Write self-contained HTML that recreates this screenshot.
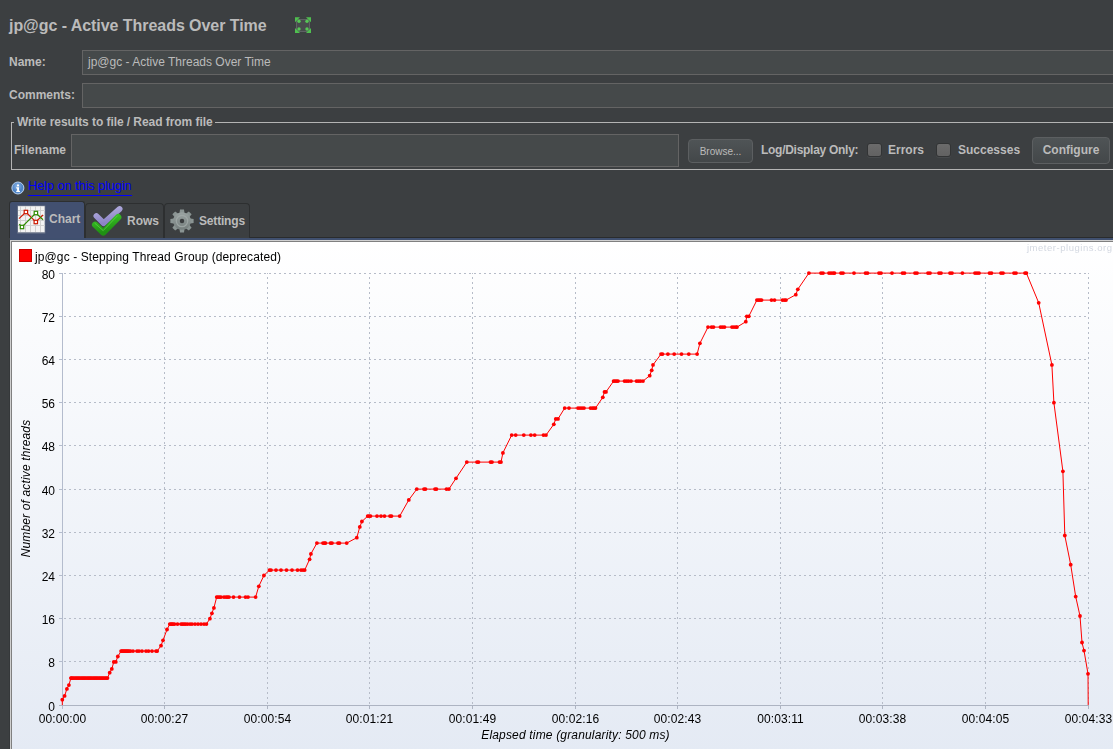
<!DOCTYPE html>
<html><head><meta charset="utf-8"><title>jp@gc - Active Threads Over Time</title>
<style>
html,body{margin:0;padding:0;}
body{width:1113px;height:749px;overflow:hidden;background:#3c3f41;font-family:"Liberation Sans",Arial,sans-serif;font-size:12px;color:#bbbbbb;position:relative;}
.abs{position:absolute;white-space:nowrap;}
.b{font-weight:bold;}
.title{left:9px;top:16px;font-size:16px;font-weight:bold;line-height:20px;letter-spacing:-0.05px;}
.lbl{font-weight:bold;line-height:14px;}
.field{background:#45494a;border:1px solid #646464;box-sizing:border-box;}
.fs{left:11px;top:122px;width:1120px;height:48px;border:1px solid #b4b4b4;box-sizing:border-box;}
.legend{left:14px;top:115px;background:#3c3f41;padding:0 2px 0 3px;letter-spacing:-0.06px;line-height:14px;font-weight:bold;}
.btn{box-sizing:border-box;border:1px solid #5c5f61;border-radius:4px;background:linear-gradient(#4f5456,#434749);text-align:center;}
.cb{width:15px;height:14px;box-sizing:border-box;border-radius:3px;background:linear-gradient(#6b6b6b,#626262);border:1px solid #323435;box-shadow:0 1px 0 #474a4c;}
a.help{color:#0000ff;text-decoration:none;font-size:12.6px;line-height:14px;border-bottom:1px solid #0000ff;padding-bottom:2px;}
.tab{box-sizing:border-box;border:1px solid #2d2f30;border-bottom:none;border-radius:4px 4px 0 0;background:#3c3f41;}
.tabsel{background:#425070;border-color:#2d2f30;border-radius:3px 3px 0 0;height:37px !important;}
svg text{font-family:"Liberation Sans",Arial,sans-serif;}
.g{stroke:#b6bcc8;stroke-width:1;stroke-dasharray:2 3;shape-rendering:crispEdges;}
.ax{stroke:#adb4c2;stroke-width:1;shape-rendering:crispEdges;}
.ay{stroke:#b4bccd;stroke-width:1;shape-rendering:crispEdges;}
</style></head><body>

<div class="abs title">jp@gc - Active Threads Over Time</div>
<svg class="abs" style="left:294px;top:16px" width="18" height="18" viewBox="0 0 18 18">
 <rect x="2.500" y="3.500" width="13" height="12" rx="2.500" fill="#484b4d" stroke="#5f6264"/>
 <g fill="#4fc04f">
  <path d="M1 1.200H6L1 6.200Z"/><path d="M17 1.200V6.200L12 1.200Z"/><path d="M17 17H12L17 12Z"/><path d="M1 17V12L6 17Z"/>
 </g>
 <g fill="#56c656">
  <circle cx="5" cy="5.300" r="1.700"/><circle cx="13" cy="5.300" r="1.700"/><circle cx="13" cy="13" r="1.700"/><circle cx="5" cy="13" r="1.700"/>
 </g>
</svg>

<div class="abs lbl" style="left:9px;top:55px">Name:</div>
<div class="abs field" style="left:82px;top:50px;width:1040px;height:25px;"></div>
<div class="abs" style="left:88px;top:55px;line-height:14px;">jp@gc - Active Threads Over Time</div>

<div class="abs lbl" style="left:9px;top:88px">Comments:</div>
<div class="abs field" style="left:82px;top:83px;width:1040px;height:25px;"></div>

<div class="abs fs"></div>
<div class="abs legend">Write results to file / Read from file</div>
<div class="abs lbl" style="left:14px;top:143px">Filename</div>
<div class="abs field" style="left:71px;top:134px;width:608px;height:33px;"></div>
<div class="abs btn" style="left:688px;top:139px;width:65px;height:24px;font-size:10px;line-height:23px;">Browse...</div>
<div class="abs lbl" style="left:761px;top:143px;letter-spacing:-0.28px">Log/Display Only:</div>
<div class="abs cb" style="left:867px;top:143px"></div>
<div class="abs lbl" style="left:888px;top:143px">Errors</div>
<div class="abs cb" style="left:936px;top:143px"></div>
<div class="abs lbl" style="left:958px;top:143px">Successes</div>
<div class="abs btn lbl" style="left:1032px;top:137px;width:78px;height:27px;line-height:25px;">Configure</div>

<svg class="abs" style="left:11px;top:181px" width="14" height="14" viewBox="0 0 14 14">
 <defs><radialGradient id="ig" cx="0.450" cy="0.350" r="0.750"><stop offset="0" stop-color="#8db6e6"/><stop offset="0.600" stop-color="#4a80c4"/><stop offset="1" stop-color="#7aa6dc"/></radialGradient></defs>
 <circle cx="6.900" cy="7" r="6" fill="url(#ig)" stroke="#b9d2ef" stroke-width="1"/>
 <rect x="6" y="3.500" width="2" height="1.800" fill="#fff"/><path d="M5.200 6.300h2.800v3.500h1v1.200H5.200v-1.200h0.900V7.400H5.200z" fill="#fff"/>
</svg>
<a class="abs help" style="left:28px;top:179px">Help on this plugin</a>

<!-- tabs -->
<div class="abs" style="left:10px;top:237px;width:1110px;height:1px;background:#2a2c2d;"></div>
<div class="abs" style="left:10px;top:238px;width:1110px;height:2px;background:#40506f;"></div>
<div class="abs tab" style="left:85px;top:203px;width:79px;height:35px;"></div>
<div class="abs tab" style="left:164px;top:203px;width:86px;height:35px;"></div>
<div class="abs tab tabsel" style="left:9px;top:201px;width:76px;height:39px;"></div>
<div class="abs lbl" style="left:49px;top:212px">Chart</div>
<div class="abs lbl" style="left:127px;top:214px">Rows</div>
<div class="abs lbl" style="left:199px;top:214px;letter-spacing:-0.18px">Settings</div>

<!-- chart icon -->
<svg class="abs" style="left:17px;top:205px" width="29" height="29" viewBox="0 0 29 29">
 <rect x="0.300" y="0.500" width="28" height="28" fill="#9a9ea8" opacity="0.550"/>
 <rect x="1" y="1.200" width="26.600" height="26" fill="#f3f3f3"/>
 <g stroke="#d0d0d0" stroke-width="1"><path d="M3.500 1V27M8.500 1V27M13.500 1V27M18.500 1V27M23.500 1V27M1 5.500H28M1 10.500H28M1 15.500H28M1 20.500H28"/></g>
 <polyline points="2,13.600 8.900,7 18.800,17 26,10" fill="none" stroke="#cc1a00" stroke-width="1.200"/>
 <polyline points="2.200,19.200 5,22 18.900,8 26,14.700" fill="none" stroke="#2e8b00" stroke-width="1.200"/>
 <rect x="7.200" y="5.300" width="3.400" height="3.400" fill="#fff" stroke="#cc1a00" stroke-width="1.200"/>
 <rect x="17.100" y="15.300" width="3.400" height="3.400" fill="#fff" stroke="#cc1a00" stroke-width="1.200"/>
 <rect x="3.300" y="20.300" width="3.400" height="3.400" fill="#fff" stroke="#2e8b00" stroke-width="1.200"/>
 <rect x="17.200" y="6.300" width="3.400" height="3.400" fill="#fff" stroke="#2e8b00" stroke-width="1.200"/>
</svg>
<!-- check icon -->
<svg class="abs" style="left:90px;top:204px" width="34" height="34" viewBox="90 204 34 34">
 <defs>
  <linearGradient id="pg" x1="0" y1="0" x2="0.300" y2="1"><stop offset="0" stop-color="#b2addf"/><stop offset="1" stop-color="#8c84c6"/></linearGradient>
  <linearGradient id="gg" x1="0" y1="0" x2="0.300" y2="1"><stop offset="0" stop-color="#3cc428"/><stop offset="1" stop-color="#1f9012"/></linearGradient>
 </defs>
 <path d="M96.400 216 L103.600 223.100 L119.600 209" fill="none" stroke="url(#pg)" stroke-width="5.800" stroke-linecap="round" stroke-linejoin="round"/>
 <path d="M95.200 224.800 L103.200 232.400 L118.200 217.200" fill="none" stroke="url(#gg)" stroke-width="6.400" stroke-linecap="round" stroke-linejoin="round"/>
 <path d="M95 223.400 L103.200 230.600 L117.200 216" fill="none" stroke="#66dc50" stroke-width="0.900" stroke-linecap="round" stroke-linejoin="round" opacity="0.700"/>
</svg>
<!-- gear icon -->
<svg class="abs" style="left:168.800px;top:207.800px" width="26" height="26" viewBox="-13.200 -13.200 26.400 26.400">
 <defs><linearGradient id="grg" gradientUnits="userSpaceOnUse" x1="0" y1="-12" x2="0" y2="12"><stop offset="0" stop-color="#a0a9a8"/><stop offset="1" stop-color="#6f7877"/></linearGradient></defs>
 <g fill="#8a9493">
  <path d="M-2 -11.800H2L2.700 -7H-2.700Z" transform="rotate(0)"/>
  <path d="M-2 -11.800H2L2.700 -7H-2.700Z" transform="rotate(45)"/>
  <path d="M-2 -11.800H2L2.700 -7H-2.700Z" transform="rotate(90)"/>
  <path d="M-2 -11.800H2L2.700 -7H-2.700Z" transform="rotate(135)"/>
  <path d="M-2 -11.800H2L2.700 -7H-2.700Z" transform="rotate(180)"/>
  <path d="M-2 -11.800H2L2.700 -7H-2.700Z" transform="rotate(225)"/>
  <path d="M-2 -11.800H2L2.700 -7H-2.700Z" transform="rotate(270)"/>
  <path d="M-2 -11.800H2L2.700 -7H-2.700Z" transform="rotate(315)"/>
 </g>
 <circle r="9" fill="url(#grg)"/>
 <circle r="5.800" fill="none" stroke="#a3abaa" stroke-width="1.200" opacity="0.800"/>
 <circle r="2.300" fill="#3a3d3f"/>
</svg>

<!-- chart panel -->
<svg class="abs" style="left:0;top:0;will-change:transform" width="1113" height="749" viewBox="0 0 1113 749">
 <defs><linearGradient id="cg" x1="0" y1="0" x2="0" y2="1"><stop offset="0" stop-color="#ffffff"/><stop offset="1" stop-color="#e4eaf4"/></linearGradient></defs>
 <rect x="9" y="240" width="1" height="520" fill="#35383a"/>
 <rect x="10" y="240" width="1110" height="520" fill="#d0d0d0"/>
 <rect x="11" y="241" width="1110" height="520" fill="#808080"/>
 <rect x="12" y="242" width="1110" height="510" fill="url(#cg)"/>
 <text x="1112.5" y="251" text-anchor="end" font-size="9.5" fill="#d3d8e1" letter-spacing="0.53">jmeter-plugins.org</text>
 <rect x="19.500" y="249.500" width="12" height="12" fill="#ff0000" stroke="#c80000"/>
 <g font-size="12" fill="#000000">
 <text x="35" y="261" letter-spacing="0.11">jp@gc - Stepping Thread Group (deprecated)</text>
 <text x="55" y="710.5" text-anchor="end">0</text><text x="55" y="666.5" text-anchor="end">8</text><text x="55" y="623.5" text-anchor="end">16</text><text x="55" y="580.5" text-anchor="end">24</text><text x="55" y="537.5" text-anchor="end">32</text><text x="55" y="494.5" text-anchor="end">40</text><text x="55" y="450.5" text-anchor="end">48</text><text x="55" y="407.5" text-anchor="end">56</text><text x="55" y="364.5" text-anchor="end">64</text><text x="55" y="321.5" text-anchor="end">72</text><text x="55" y="278.5" text-anchor="end">80</text>
 <text x="62.5" y="723" text-anchor="middle" letter-spacing="0.1">00:00:00</text><text x="164.5" y="723" text-anchor="middle" letter-spacing="0.1">00:00:27</text><text x="267.5" y="723" text-anchor="middle" letter-spacing="0.1">00:00:54</text><text x="369.5" y="723" text-anchor="middle" letter-spacing="0.1">00:01:21</text><text x="472.5" y="723" text-anchor="middle" letter-spacing="0.1">00:01:49</text><text x="575.5" y="723" text-anchor="middle" letter-spacing="0.1">00:02:16</text><text x="677.5" y="723" text-anchor="middle" letter-spacing="0.1">00:02:43</text><text x="780.5" y="723" text-anchor="middle" letter-spacing="0.1">00:03:11</text><text x="882.5" y="723" text-anchor="middle" letter-spacing="0.1">00:03:38</text><text x="985.5" y="723" text-anchor="middle" letter-spacing="0.1">00:04:05</text><text x="1088.5" y="723" text-anchor="middle" letter-spacing="0.1">00:04:33</text>
 <text x="575.5" y="739" text-anchor="middle" font-style="italic" letter-spacing="0.17">Elapsed time (granularity: 500 ms)</text>
 <text transform="translate(30.4,488.5) rotate(-90)" text-anchor="middle" font-style="italic" letter-spacing="0.15">Number of active threads</text>
 </g>
 <line x1="164.5" y1="273" x2="164.5" y2="705" class="g" stroke-dashoffset="1"/>
<line x1="164.5" y1="705" x2="164.5" y2="709" class="ax"/>
<line x1="267.5" y1="273" x2="267.5" y2="705" class="g" stroke-dashoffset="1"/>
<line x1="267.5" y1="705" x2="267.5" y2="709" class="ax"/>
<line x1="369.5" y1="273" x2="369.5" y2="705" class="g" stroke-dashoffset="1"/>
<line x1="369.5" y1="705" x2="369.5" y2="709" class="ax"/>
<line x1="472.5" y1="273" x2="472.5" y2="705" class="g" stroke-dashoffset="1"/>
<line x1="472.5" y1="705" x2="472.5" y2="709" class="ax"/>
<line x1="575.5" y1="273" x2="575.5" y2="705" class="g" stroke-dashoffset="1"/>
<line x1="575.5" y1="705" x2="575.5" y2="709" class="ax"/>
<line x1="677.5" y1="273" x2="677.5" y2="705" class="g" stroke-dashoffset="1"/>
<line x1="677.5" y1="705" x2="677.5" y2="709" class="ax"/>
<line x1="780.5" y1="273" x2="780.5" y2="705" class="g" stroke-dashoffset="1"/>
<line x1="780.5" y1="705" x2="780.5" y2="709" class="ax"/>
<line x1="882.5" y1="273" x2="882.5" y2="705" class="g" stroke-dashoffset="1"/>
<line x1="882.5" y1="705" x2="882.5" y2="709" class="ax"/>
<line x1="985.5" y1="273" x2="985.5" y2="705" class="g" stroke-dashoffset="1"/>
<line x1="985.5" y1="705" x2="985.5" y2="709" class="ax"/>
<line x1="1088.5" y1="273" x2="1088.5" y2="705" class="g" stroke-dashoffset="1"/>
<line x1="1088.5" y1="705" x2="1088.5" y2="709" class="ax"/>
<line x1="64" y1="661.5" x2="1089" y2="661.5" class="g"/>
<line x1="59" y1="661.5" x2="63" y2="661.5" class="ay"/>
<line x1="64" y1="618.5" x2="1089" y2="618.5" class="g"/>
<line x1="59" y1="618.5" x2="63" y2="618.5" class="ay"/>
<line x1="64" y1="575.5" x2="1089" y2="575.5" class="g"/>
<line x1="59" y1="575.5" x2="63" y2="575.5" class="ay"/>
<line x1="64" y1="532.5" x2="1089" y2="532.5" class="g"/>
<line x1="59" y1="532.5" x2="63" y2="532.5" class="ay"/>
<line x1="64" y1="489.5" x2="1089" y2="489.5" class="g"/>
<line x1="59" y1="489.5" x2="63" y2="489.5" class="ay"/>
<line x1="64" y1="445.5" x2="1089" y2="445.5" class="g"/>
<line x1="59" y1="445.5" x2="63" y2="445.5" class="ay"/>
<line x1="64" y1="402.5" x2="1089" y2="402.5" class="g"/>
<line x1="59" y1="402.5" x2="63" y2="402.5" class="ay"/>
<line x1="64" y1="359.5" x2="1089" y2="359.5" class="g"/>
<line x1="59" y1="359.5" x2="63" y2="359.5" class="ay"/>
<line x1="64" y1="316.5" x2="1089" y2="316.5" class="g"/>
<line x1="59" y1="316.5" x2="63" y2="316.5" class="ay"/>
<line x1="64" y1="273.5" x2="1089" y2="273.5" class="g"/>
<line x1="59" y1="273.5" x2="63" y2="273.5" class="ay"/>
 <line x1="62.500" y1="273" x2="62.500" y2="709" class="ay"/>
 <line x1="59" y1="705.500" x2="1089" y2="705.500" class="ax"/>
 <polyline points="62.3,705.1 62.3,699.7 64.6,695.9 66.9,688.9 68.9,685.1 70.9,678.1 71.5,678.1 72.7,678.1 73.9,678.1 75.1,678.1 76.3,678.1 77.5,678.1 78.7,678.1 79.9,678.1 81.1,678.1 82.3,678.1 83.5,678.1 84.7,678.1 85.9,678.1 87.1,678.1 88.3,678.1 89.5,678.1 90.7,678.1 91.9,678.1 93.1,678.1 94.3,678.1 95.5,678.1 96.7,678.1 97.9,678.1 99.1,678.1 100.3,678.1 101.5,678.1 102.7,678.1 103.9,678.1 105.1,678.1 106.3,678.1 107.5,678.1 109.7,672.7 111.8,668.9 113.8,661.9 115.8,661.9 117.8,656.5 121.1,651.1 122.0,651.1 123.0,651.1 124.0,651.1 125.0,651.1 126.0,651.1 127.0,651.1 128.0,651.1 129.0,651.1 130.5,651.1 133.0,651.1 137.0,651.1 139.0,651.1 142.0,651.1 146.0,651.1 148.5,651.1 152.0,651.1 156.0,651.1 157.2,651.1 161.0,645.7 163.0,640.3 167.0,629.5 169.8,624.1 171.0,624.1 172.0,624.1 173.0,624.1 174.5,624.1 177.5,624.1 181.0,624.1 182.5,624.1 184.0,624.1 185.5,624.1 187.5,624.1 190.0,624.1 192.0,624.1 195.0,624.1 198.0,624.1 201.0,624.1 204.0,624.1 206.4,624.1 209.9,618.7 211.9,613.3 213.9,607.9 216.7,597.1 218.0,597.1 219.5,597.1 221.0,597.1 224.0,597.1 226.0,597.1 227.5,597.1 229.0,597.1 233.5,597.1 239.5,597.1 245.5,597.1 248.0,597.1 255.6,597.1 258.8,586.3 263.9,575.5 269.4,570.1 271.0,570.1 276.0,570.1 281.0,570.1 286.5,570.1 292.0,570.1 297.5,570.1 301.0,570.1 303.0,570.1 304.7,570.1 309.6,559.3 310.9,553.9 316.9,543.1 323.0,543.1 324.5,543.1 325.5,543.1 330.5,543.1 332.0,543.1 338.0,543.1 339.5,543.1 346.7,543.1 356.8,537.7 359.8,526.9 361.9,521.5 367.7,516.1 369.0,516.1 370.5,516.1 377.0,516.1 381.0,516.1 384.5,516.1 390.0,516.1 391.5,516.1 399.7,516.1 408.8,499.9 416.8,489.1 424.0,489.1 425.5,489.1 435.0,489.1 436.5,489.1 446.5,489.1 448.9,489.1 456.0,478.3 466.8,462.1 477.0,462.1 478.5,462.1 490.5,462.1 492.0,462.1 499.5,462.1 501.0,462.1 502.9,452.9 511.7,435.1 515.7,435.1 523.8,435.1 530.9,435.1 534.7,435.1 543.5,435.1 546.0,435.1 553.8,424.3 555.8,418.9 558.0,418.9 564.7,408.1 569.0,408.1 578.0,408.1 580.0,408.1 582.0,408.1 584.0,408.1 590.5,408.1 592.5,408.1 594.0,408.1 595.5,408.1 602.8,397.3 604.5,391.9 606.0,391.9 613.6,381.1 615.0,381.1 616.5,381.1 618.0,381.1 624.5,381.1 626.5,381.1 628.5,381.1 631.0,381.1 636.5,381.1 638.5,381.1 640.5,381.1 643.0,381.1 649.7,375.7 651.7,370.3 653.0,364.9 661.0,354.1 662.5,354.1 667.9,354.1 674.2,354.1 681.5,354.1 688.8,354.1 697.1,354.1 699.9,343.3 708.0,327.1 711.5,327.1 713.5,327.1 720.5,327.1 722.5,327.1 724.5,327.1 732.0,327.1 734.0,327.1 736.0,327.1 737.0,327.1 745.8,321.7 746.8,316.3 748.8,316.3 756.9,300.1 758.5,300.1 760.0,300.1 761.5,300.1 771.5,300.1 774.5,300.1 782.5,300.1 784.5,300.1 786.0,300.1 795.8,294.7 797.8,289.3 808.9,273.1 821.0,273.1 823.0,273.1 829.0,273.1 831.0,273.1 833.0,273.1 834.5,273.1 841.0,273.1 843.0,273.1 854.0,273.1 865.5,273.1 867.5,273.1 879.0,273.1 881.0,273.1 892.0,273.1 902.5,273.1 904.5,273.1 915.0,273.1 917.0,273.1 928.0,273.1 930.0,273.1 939.0,273.1 941.0,273.1 950.0,273.1 952.0,273.1 962.4,273.1 975.0,273.1 977.0,273.1 979.0,273.1 989.5,273.1 991.5,273.1 1001.0,273.1 1003.0,273.1 1014.0,273.1 1016.0,273.1 1025.0,273.1 1026.4,273.1 1038.7,302.8 1051.9,364.9 1053.9,402.7 1062.9,471.3 1064.8,535.5 1070.7,564.7 1075.7,596.6 1080.0,616.0 1082.0,642.5 1084.0,650.6 1088.0,673.8 1088.2,705.1" fill="none" stroke="#ff0000" stroke-width="1"/>
 <g fill="#ff0000"><circle cx="62.3" cy="699.7" r="1.9"/><circle cx="64.6" cy="695.9" r="1.9"/><circle cx="66.9" cy="688.9" r="1.9"/><circle cx="68.9" cy="685.1" r="1.9"/><circle cx="70.9" cy="678.1" r="1.9"/><circle cx="71.5" cy="678.1" r="1.9"/><circle cx="72.7" cy="678.1" r="1.9"/><circle cx="73.9" cy="678.1" r="1.9"/><circle cx="75.1" cy="678.1" r="1.9"/><circle cx="76.3" cy="678.1" r="1.9"/><circle cx="77.5" cy="678.1" r="1.9"/><circle cx="78.7" cy="678.1" r="1.9"/><circle cx="79.9" cy="678.1" r="1.9"/><circle cx="81.1" cy="678.1" r="1.9"/><circle cx="82.3" cy="678.1" r="1.9"/><circle cx="83.5" cy="678.1" r="1.9"/><circle cx="84.7" cy="678.1" r="1.9"/><circle cx="85.9" cy="678.1" r="1.9"/><circle cx="87.1" cy="678.1" r="1.9"/><circle cx="88.3" cy="678.1" r="1.9"/><circle cx="89.5" cy="678.1" r="1.9"/><circle cx="90.7" cy="678.1" r="1.9"/><circle cx="91.9" cy="678.1" r="1.9"/><circle cx="93.1" cy="678.1" r="1.9"/><circle cx="94.3" cy="678.1" r="1.9"/><circle cx="95.5" cy="678.1" r="1.9"/><circle cx="96.7" cy="678.1" r="1.9"/><circle cx="97.9" cy="678.1" r="1.9"/><circle cx="99.1" cy="678.1" r="1.9"/><circle cx="100.3" cy="678.1" r="1.9"/><circle cx="101.5" cy="678.1" r="1.9"/><circle cx="102.7" cy="678.1" r="1.9"/><circle cx="103.9" cy="678.1" r="1.9"/><circle cx="105.1" cy="678.1" r="1.9"/><circle cx="106.3" cy="678.1" r="1.9"/><circle cx="107.5" cy="678.1" r="1.9"/><circle cx="109.7" cy="672.7" r="1.9"/><circle cx="111.8" cy="668.9" r="1.9"/><circle cx="113.8" cy="661.9" r="1.9"/><circle cx="115.8" cy="661.9" r="1.9"/><circle cx="117.8" cy="656.5" r="1.9"/><circle cx="121.1" cy="651.1" r="1.9"/><circle cx="122.0" cy="651.1" r="1.9"/><circle cx="123.0" cy="651.1" r="1.9"/><circle cx="124.0" cy="651.1" r="1.9"/><circle cx="125.0" cy="651.1" r="1.9"/><circle cx="126.0" cy="651.1" r="1.9"/><circle cx="127.0" cy="651.1" r="1.9"/><circle cx="128.0" cy="651.1" r="1.9"/><circle cx="129.0" cy="651.1" r="1.9"/><circle cx="130.5" cy="651.1" r="1.9"/><circle cx="133.0" cy="651.1" r="1.9"/><circle cx="137.0" cy="651.1" r="1.9"/><circle cx="139.0" cy="651.1" r="1.9"/><circle cx="142.0" cy="651.1" r="1.9"/><circle cx="146.0" cy="651.1" r="1.9"/><circle cx="148.5" cy="651.1" r="1.9"/><circle cx="152.0" cy="651.1" r="1.9"/><circle cx="156.0" cy="651.1" r="1.9"/><circle cx="157.2" cy="651.1" r="1.9"/><circle cx="161.0" cy="645.7" r="1.9"/><circle cx="163.0" cy="640.3" r="1.9"/><circle cx="167.0" cy="629.5" r="1.9"/><circle cx="169.8" cy="624.1" r="1.9"/><circle cx="171.0" cy="624.1" r="1.9"/><circle cx="172.0" cy="624.1" r="1.9"/><circle cx="173.0" cy="624.1" r="1.9"/><circle cx="174.5" cy="624.1" r="1.9"/><circle cx="177.5" cy="624.1" r="1.9"/><circle cx="181.0" cy="624.1" r="1.9"/><circle cx="182.5" cy="624.1" r="1.9"/><circle cx="184.0" cy="624.1" r="1.9"/><circle cx="185.5" cy="624.1" r="1.9"/><circle cx="187.5" cy="624.1" r="1.9"/><circle cx="190.0" cy="624.1" r="1.9"/><circle cx="192.0" cy="624.1" r="1.9"/><circle cx="195.0" cy="624.1" r="1.9"/><circle cx="198.0" cy="624.1" r="1.9"/><circle cx="201.0" cy="624.1" r="1.9"/><circle cx="204.0" cy="624.1" r="1.9"/><circle cx="206.4" cy="624.1" r="1.9"/><circle cx="209.9" cy="618.7" r="1.9"/><circle cx="211.9" cy="613.3" r="1.9"/><circle cx="213.9" cy="607.9" r="1.9"/><circle cx="216.7" cy="597.1" r="1.9"/><circle cx="218.0" cy="597.1" r="1.9"/><circle cx="219.5" cy="597.1" r="1.9"/><circle cx="221.0" cy="597.1" r="1.9"/><circle cx="224.0" cy="597.1" r="1.9"/><circle cx="226.0" cy="597.1" r="1.9"/><circle cx="227.5" cy="597.1" r="1.9"/><circle cx="229.0" cy="597.1" r="1.9"/><circle cx="233.5" cy="597.1" r="1.9"/><circle cx="239.5" cy="597.1" r="1.9"/><circle cx="245.5" cy="597.1" r="1.9"/><circle cx="248.0" cy="597.1" r="1.9"/><circle cx="255.6" cy="597.1" r="1.9"/><circle cx="258.8" cy="586.3" r="1.9"/><circle cx="263.9" cy="575.5" r="1.9"/><circle cx="269.4" cy="570.1" r="1.9"/><circle cx="271.0" cy="570.1" r="1.9"/><circle cx="276.0" cy="570.1" r="1.9"/><circle cx="281.0" cy="570.1" r="1.9"/><circle cx="286.5" cy="570.1" r="1.9"/><circle cx="292.0" cy="570.1" r="1.9"/><circle cx="297.5" cy="570.1" r="1.9"/><circle cx="301.0" cy="570.1" r="1.9"/><circle cx="303.0" cy="570.1" r="1.9"/><circle cx="304.7" cy="570.1" r="1.9"/><circle cx="309.6" cy="559.3" r="1.9"/><circle cx="310.9" cy="553.9" r="1.9"/><circle cx="316.9" cy="543.1" r="1.9"/><circle cx="323.0" cy="543.1" r="1.9"/><circle cx="324.5" cy="543.1" r="1.9"/><circle cx="325.5" cy="543.1" r="1.9"/><circle cx="330.5" cy="543.1" r="1.9"/><circle cx="332.0" cy="543.1" r="1.9"/><circle cx="338.0" cy="543.1" r="1.9"/><circle cx="339.5" cy="543.1" r="1.9"/><circle cx="346.7" cy="543.1" r="1.9"/><circle cx="356.8" cy="537.7" r="1.9"/><circle cx="359.8" cy="526.9" r="1.9"/><circle cx="361.9" cy="521.5" r="1.9"/><circle cx="367.7" cy="516.1" r="1.9"/><circle cx="369.0" cy="516.1" r="1.9"/><circle cx="370.5" cy="516.1" r="1.9"/><circle cx="377.0" cy="516.1" r="1.9"/><circle cx="381.0" cy="516.1" r="1.9"/><circle cx="384.5" cy="516.1" r="1.9"/><circle cx="390.0" cy="516.1" r="1.9"/><circle cx="391.5" cy="516.1" r="1.9"/><circle cx="399.7" cy="516.1" r="1.9"/><circle cx="408.8" cy="499.9" r="1.9"/><circle cx="416.8" cy="489.1" r="1.9"/><circle cx="424.0" cy="489.1" r="1.9"/><circle cx="425.5" cy="489.1" r="1.9"/><circle cx="435.0" cy="489.1" r="1.9"/><circle cx="436.5" cy="489.1" r="1.9"/><circle cx="446.5" cy="489.1" r="1.9"/><circle cx="448.9" cy="489.1" r="1.9"/><circle cx="456.0" cy="478.3" r="1.9"/><circle cx="466.8" cy="462.1" r="1.9"/><circle cx="477.0" cy="462.1" r="1.9"/><circle cx="478.5" cy="462.1" r="1.9"/><circle cx="490.5" cy="462.1" r="1.9"/><circle cx="492.0" cy="462.1" r="1.9"/><circle cx="499.5" cy="462.1" r="1.9"/><circle cx="501.0" cy="462.1" r="1.9"/><circle cx="502.9" cy="452.9" r="1.9"/><circle cx="511.7" cy="435.1" r="1.9"/><circle cx="515.7" cy="435.1" r="1.9"/><circle cx="523.8" cy="435.1" r="1.9"/><circle cx="530.9" cy="435.1" r="1.9"/><circle cx="534.7" cy="435.1" r="1.9"/><circle cx="543.5" cy="435.1" r="1.9"/><circle cx="546.0" cy="435.1" r="1.9"/><circle cx="553.8" cy="424.3" r="1.9"/><circle cx="555.8" cy="418.9" r="1.9"/><circle cx="558.0" cy="418.9" r="1.9"/><circle cx="564.7" cy="408.1" r="1.9"/><circle cx="569.0" cy="408.1" r="1.9"/><circle cx="578.0" cy="408.1" r="1.9"/><circle cx="580.0" cy="408.1" r="1.9"/><circle cx="582.0" cy="408.1" r="1.9"/><circle cx="584.0" cy="408.1" r="1.9"/><circle cx="590.5" cy="408.1" r="1.9"/><circle cx="592.5" cy="408.1" r="1.9"/><circle cx="594.0" cy="408.1" r="1.9"/><circle cx="595.5" cy="408.1" r="1.9"/><circle cx="602.8" cy="397.3" r="1.9"/><circle cx="604.5" cy="391.9" r="1.9"/><circle cx="606.0" cy="391.9" r="1.9"/><circle cx="613.6" cy="381.1" r="1.9"/><circle cx="615.0" cy="381.1" r="1.9"/><circle cx="616.5" cy="381.1" r="1.9"/><circle cx="618.0" cy="381.1" r="1.9"/><circle cx="624.5" cy="381.1" r="1.9"/><circle cx="626.5" cy="381.1" r="1.9"/><circle cx="628.5" cy="381.1" r="1.9"/><circle cx="631.0" cy="381.1" r="1.9"/><circle cx="636.5" cy="381.1" r="1.9"/><circle cx="638.5" cy="381.1" r="1.9"/><circle cx="640.5" cy="381.1" r="1.9"/><circle cx="643.0" cy="381.1" r="1.9"/><circle cx="649.7" cy="375.7" r="1.9"/><circle cx="651.7" cy="370.3" r="1.9"/><circle cx="653.0" cy="364.9" r="1.9"/><circle cx="661.0" cy="354.1" r="1.9"/><circle cx="662.5" cy="354.1" r="1.9"/><circle cx="667.9" cy="354.1" r="1.9"/><circle cx="674.2" cy="354.1" r="1.9"/><circle cx="681.5" cy="354.1" r="1.9"/><circle cx="688.8" cy="354.1" r="1.9"/><circle cx="697.1" cy="354.1" r="1.9"/><circle cx="699.9" cy="343.3" r="1.9"/><circle cx="708.0" cy="327.1" r="1.9"/><circle cx="711.5" cy="327.1" r="1.9"/><circle cx="713.5" cy="327.1" r="1.9"/><circle cx="720.5" cy="327.1" r="1.9"/><circle cx="722.5" cy="327.1" r="1.9"/><circle cx="724.5" cy="327.1" r="1.9"/><circle cx="732.0" cy="327.1" r="1.9"/><circle cx="734.0" cy="327.1" r="1.9"/><circle cx="736.0" cy="327.1" r="1.9"/><circle cx="737.0" cy="327.1" r="1.9"/><circle cx="745.8" cy="321.7" r="1.9"/><circle cx="746.8" cy="316.3" r="1.9"/><circle cx="748.8" cy="316.3" r="1.9"/><circle cx="756.9" cy="300.1" r="1.9"/><circle cx="758.5" cy="300.1" r="1.9"/><circle cx="760.0" cy="300.1" r="1.9"/><circle cx="761.5" cy="300.1" r="1.9"/><circle cx="771.5" cy="300.1" r="1.9"/><circle cx="774.5" cy="300.1" r="1.9"/><circle cx="782.5" cy="300.1" r="1.9"/><circle cx="784.5" cy="300.1" r="1.9"/><circle cx="786.0" cy="300.1" r="1.9"/><circle cx="795.8" cy="294.7" r="1.9"/><circle cx="797.8" cy="289.3" r="1.9"/><circle cx="808.9" cy="273.1" r="1.9"/><circle cx="821.0" cy="273.1" r="1.9"/><circle cx="823.0" cy="273.1" r="1.9"/><circle cx="829.0" cy="273.1" r="1.9"/><circle cx="831.0" cy="273.1" r="1.9"/><circle cx="833.0" cy="273.1" r="1.9"/><circle cx="834.5" cy="273.1" r="1.9"/><circle cx="841.0" cy="273.1" r="1.9"/><circle cx="843.0" cy="273.1" r="1.9"/><circle cx="854.0" cy="273.1" r="1.9"/><circle cx="865.5" cy="273.1" r="1.9"/><circle cx="867.5" cy="273.1" r="1.9"/><circle cx="879.0" cy="273.1" r="1.9"/><circle cx="881.0" cy="273.1" r="1.9"/><circle cx="892.0" cy="273.1" r="1.9"/><circle cx="902.5" cy="273.1" r="1.9"/><circle cx="904.5" cy="273.1" r="1.9"/><circle cx="915.0" cy="273.1" r="1.9"/><circle cx="917.0" cy="273.1" r="1.9"/><circle cx="928.0" cy="273.1" r="1.9"/><circle cx="930.0" cy="273.1" r="1.9"/><circle cx="939.0" cy="273.1" r="1.9"/><circle cx="941.0" cy="273.1" r="1.9"/><circle cx="950.0" cy="273.1" r="1.9"/><circle cx="952.0" cy="273.1" r="1.9"/><circle cx="962.4" cy="273.1" r="1.9"/><circle cx="975.0" cy="273.1" r="1.9"/><circle cx="977.0" cy="273.1" r="1.9"/><circle cx="979.0" cy="273.1" r="1.9"/><circle cx="989.5" cy="273.1" r="1.9"/><circle cx="991.5" cy="273.1" r="1.9"/><circle cx="1001.0" cy="273.1" r="1.9"/><circle cx="1003.0" cy="273.1" r="1.9"/><circle cx="1014.0" cy="273.1" r="1.9"/><circle cx="1016.0" cy="273.1" r="1.9"/><circle cx="1025.0" cy="273.1" r="1.9"/><circle cx="1026.4" cy="273.1" r="1.9"/><circle cx="1038.7" cy="302.8" r="1.9"/><circle cx="1051.9" cy="364.9" r="1.9"/><circle cx="1053.9" cy="402.7" r="1.9"/><circle cx="1062.9" cy="471.3" r="1.9"/><circle cx="1064.8" cy="535.5" r="1.9"/><circle cx="1070.7" cy="564.7" r="1.9"/><circle cx="1075.7" cy="596.6" r="1.9"/><circle cx="1080.0" cy="616.0" r="1.9"/><circle cx="1082.0" cy="642.5" r="1.9"/><circle cx="1084.0" cy="650.6" r="1.9"/><circle cx="1088.0" cy="673.8" r="1.9"/></g>
</svg>
</body></html>
